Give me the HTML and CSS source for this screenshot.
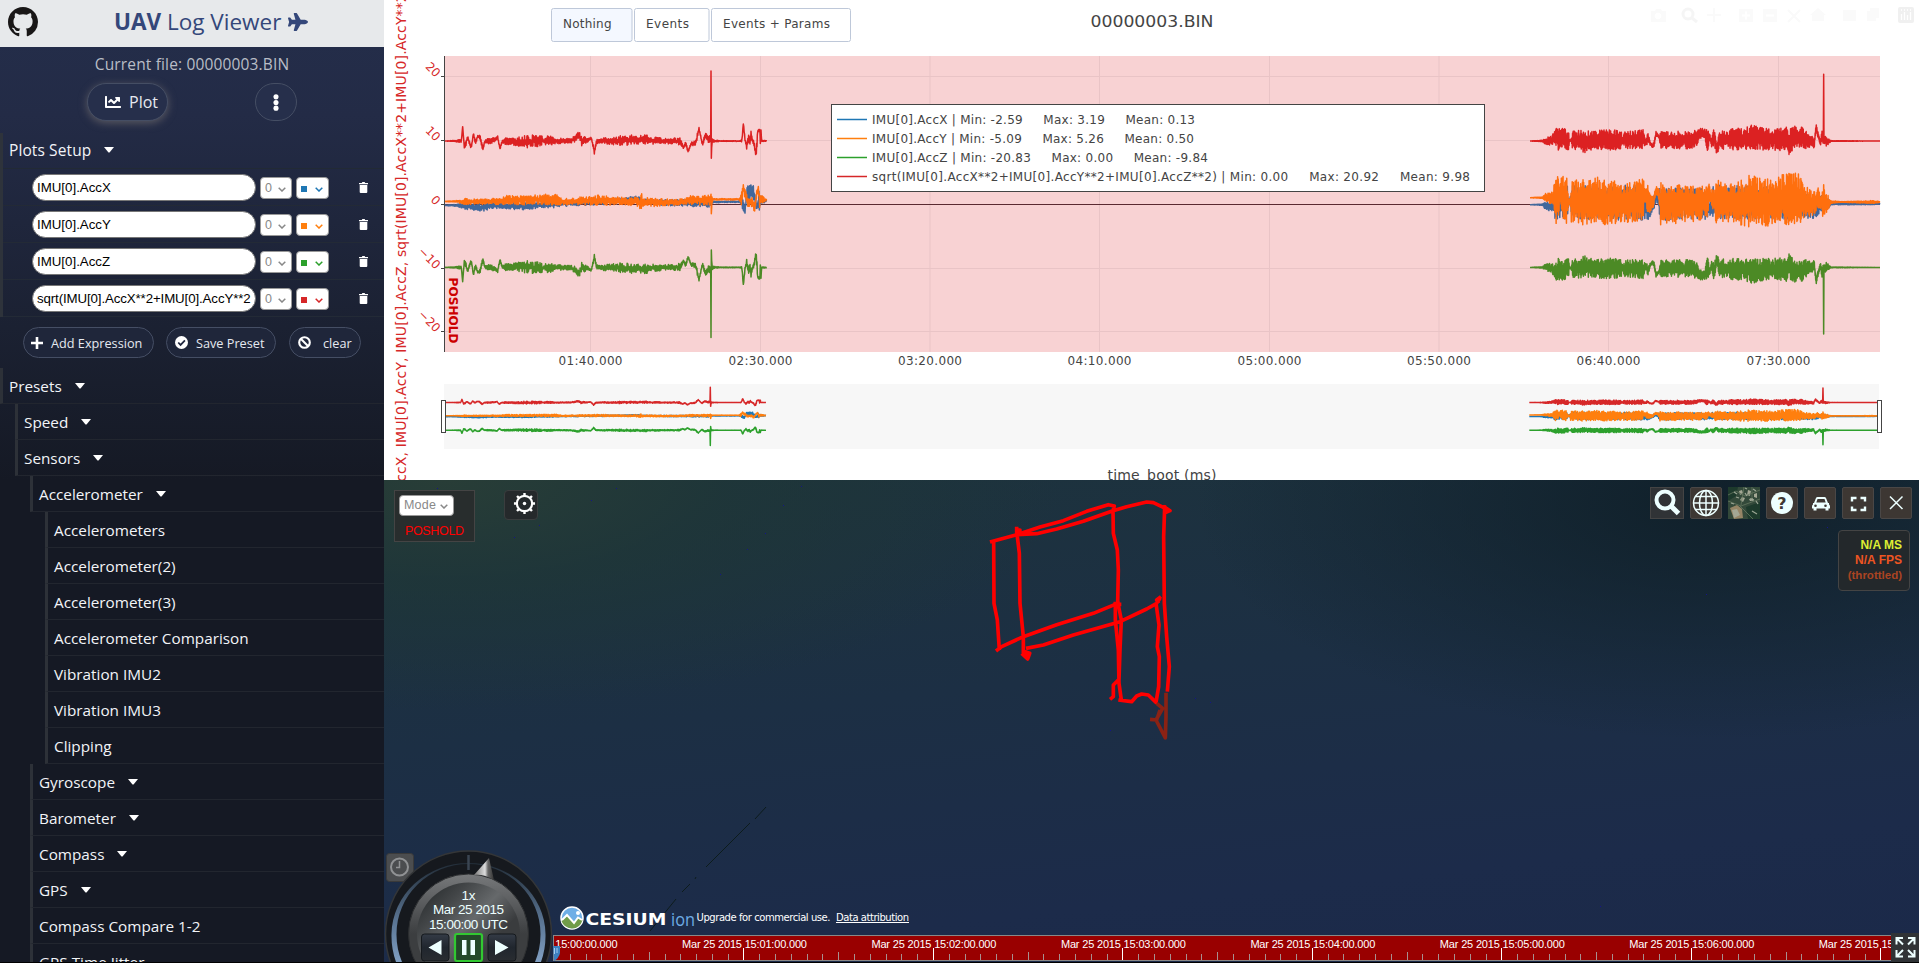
FILE: index.html
```
<!DOCTYPE html>
<html lang="en">
<head>
<meta charset="utf-8">
<title>UAV Log Viewer</title>
<link rel="stylesheet" href="styles.css">
</head>
<body>
<svg width="0" height="0" class="defs">
  <defs>
    <symbol id="trash" viewBox="0 0 9 11"><path d="M0 1h2.800l.6-1h2.200l.6 1H9v1.300H0zM.7 3h7.600v7q0 1-1 1H1.700q-1 0-1-1z"/></symbol>
    <symbol id="chev" viewBox="0 0 8 5"><path d="M.7.7 4 4 7.300.7" fill="none" stroke="currentColor" stroke-width="1.500"/></symbol>
    <symbol id="caret" viewBox="0 0 10 6"><path d="M0 0h10L5.500 5.500h-1z"/></symbol>
  </defs>
</svg>
<div class="app">
  <aside class="sidebar">
    <header class="brand">
      <svg class="github" viewBox="0 0 16 16"><path d="M8 0C3.580 0 0 3.580 0 8c0 3.540 2.290 6.530 5.470 7.590.4.070.55-.17.55-.38 0-.19-.01-.82-.01-1.490-2.010.37-2.530-.49-2.690-.94-.09-.23-.48-.94-.82-1.130-.28-.15-.68-.52-.01-.53.63-.01 1.080.58 1.230.82.72 1.210 1.870.87 2.330.66.070-.52.28-.87.51-1.070-1.780-.2-3.640-.89-3.640-3.950 0-.87.31-1.590.82-2.150-.08-.2-.36-1.020.08-2.120 0 0 .67-.21 2.200.82.64-.18 1.320-.27 2-.27s1.360.09 2 .27c1.530-1.040 2.200-.82 2.200-.82.44 1.100.16 1.920.08 2.120.51.56.82 1.270.82 2.150 0 3.070-1.870 3.750-3.650 3.950.29.25.54.73.54 1.480 0 1.070-.01 1.930-.01 2.200 0 .21.15.46.55.38A8.010 8.010 0 0 0 16 8c0-4.420-3.580-8-8-8z"/></svg>
      <h1><b>UAV</b> Log Viewer</h1>
      <svg class="plane" viewBox="0 0 576 512"><path d="M480 192H365.710L260.610 8.060A16.014 16.014 0 0 0 246.710 0h-65.500c-10.630 0-18.300 10.170-15.380 20.390L214.860 192H112l-43.200-57.600c-3.020-4.030-7.770-6.400-12.800-6.400H16.010C5.600 128-2.040 137.780.49 147.880L32 256 .49 364.120C-2.040 374.220 5.600 384 16.010 384H56c5.040 0 9.780-2.370 12.800-6.400L112 320h102.860l-49.030 171.600c-2.920 10.220 4.750 20.400 15.380 20.400h65.500c5.740 0 11.040-3.080 13.890-8.060L365.710 320H480c35.350 0 96-28.650 96-64s-60.650-64-96-64z"/></svg>
    </header>
    <p class="file">Current file: 00000003.BIN</p>
    <div class="tabs">
      <button class="pill plot"><svg viewBox="0 0 512 512"><path d="M496 384H64V80c0-8.840-7.160-16-16-16H16C7.160 64 0 71.160 0 80v336c0 17.670 14.330 32 32 32h464c8.840 0 16-7.160 16-16v-32c0-8.840-7.160-16-16-16zM464 96H345.940c-21.380 0-32.090 25.850-16.970 40.970l32.400 32.400L288 242.750l-73.370-73.370c-12.500-12.500-32.760-12.500-45.250 0l-68.690 68.690c-6.250 6.250-6.250 16.380 0 22.630l22.620 22.620c6.250 6.250 16.380 6.250 22.630 0L192 237.250l73.370 73.370c12.500 12.500 32.760 12.500 45.250 0l96-96 32.400 32.400c15.120 15.120 40.970 4.410 40.970-16.970V112c.01-8.840-7.150-16-15.990-16z"/></svg><span>Plot</span></button>
      <button class="pill dots"><svg viewBox="0 0 6 18"><circle cx="3" cy="3" r="2.700"/><circle cx="3" cy="9" r="2.700"/><circle cx="3" cy="15" r="2.700"/></svg></button>
    </div>
    <section class="setup">
      <div class="setup-head"><span>Plots Setup</span><svg class="caret"><use href="#caret"/></svg></div>
      <div class="expr blue"><div class="field">IMU[0].AccX</div><div class="sel">0<svg><use href="#chev"/></svg></div><div class="sel color"><i></i><svg><use href="#chev"/></svg></div><svg class="trash"><use href="#trash"/></svg></div>
      <div class="expr orange"><div class="field">IMU[0].AccY</div><div class="sel">0<svg><use href="#chev"/></svg></div><div class="sel color"><i></i><svg><use href="#chev"/></svg></div><svg class="trash"><use href="#trash"/></svg></div>
      <div class="expr green"><div class="field">IMU[0].AccZ</div><div class="sel">0<svg><use href="#chev"/></svg></div><div class="sel color"><i></i><svg><use href="#chev"/></svg></div><svg class="trash"><use href="#trash"/></svg></div>
      <div class="expr red"><div class="field long">sqrt(IMU[0].AccX**2+IMU[0].AccY**2</div><div class="sel">0<svg><use href="#chev"/></svg></div><div class="sel color"><i></i><svg><use href="#chev"/></svg></div><svg class="trash"><use href="#trash"/></svg></div>
    </section>
    <div class="actions">
      <button class="pill small add"><svg viewBox="0 0 12 12"><path d="M4.700 0h2.600v4.700H12v2.600H7.300V12H4.700V7.300H0V4.700h4.700z"/></svg><span>Add Expression</span></button>
      <button class="pill small save"><svg viewBox="0 0 14 14"><circle cx="7" cy="7" r="7"/><path d="M3.500 7 6 9.600l4.700-4.800" fill="none" stroke="#20273f" stroke-width="1.900"/></svg><span>Save Preset</span></button>
      <button class="pill small clear"><svg viewBox="0 0 14 14"><circle cx="7" cy="7" r="5.700" fill="none" stroke="#fff" stroke-width="2.300"/><path d="m3 3 8 8" stroke="#fff" stroke-width="2.200"/></svg><span>clear</span></button>
    </div>
    <ul class="tree">
      <li class="l0"><span>Presets</span><svg class="caret"><use href="#caret"/></svg></li>
      <li class="l1"><span>Speed</span><svg class="caret"><use href="#caret"/></svg></li>
      <li class="l1"><span>Sensors</span><svg class="caret"><use href="#caret"/></svg></li>
      <li class="l2"><span>Accelerometer</span><svg class="caret"><use href="#caret"/></svg></li>
      <li class="l3">Accelerometers</li>
      <li class="l3">Accelerometer(2)</li>
      <li class="l3">Accelerometer(3)</li>
      <li class="l3">Accelerometer Comparison</li>
      <li class="l3">Vibration IMU2</li>
      <li class="l3">Vibration IMU3</li>
      <li class="l3">Clipping</li>
      <li class="l2"><span>Gyroscope</span><svg class="caret"><use href="#caret"/></svg></li>
      <li class="l2"><span>Barometer</span><svg class="caret"><use href="#caret"/></svg></li>
      <li class="l2"><span>Compass</span><svg class="caret"><use href="#caret"/></svg></li>
      <li class="l2"><span>GPS</span><svg class="caret"><use href="#caret"/></svg></li>
      <li class="l2">Compass Compare 1-2</li>
      <li class="l2">GPS Time Jitter</li>
    </ul>
  </aside>
  <main class="content">
    <section class="chart">
      <svg id="plot" viewBox="384 0 1535 480" width="1535" height="480">
        <text x="1090.500" y="27" class="title" textLength="123" lengthAdjust="spacingAndGlyphs">00000003.BIN</text>
        <g class="menu">
          <rect x="551.500" y="8.500" width="80.500" height="33" rx="2"/>
          <rect x="634.500" y="8.500" width="74.500" height="33" rx="2"/>
          <rect x="711.500" y="8.500" width="139" height="33" rx="2"/>
          <text x="563" y="28" textLength="48.500">Nothing</text>
          <text x="646" y="28" textLength="43">Events</text>
          <text x="723" y="28" textLength="107">Events + Params</text>
        </g>
        <g class="modebar" transform="translate(0 7)">
          <path d="M1651 4h4l1-2h5l1 2h4v11h-15z"/><circle cx="1658" cy="9" r="3" class="hole"/>
          <path d="M1707 8h14M1714 1v14" class="line"/>
          <path d="M1739 2h14v13h-14zM1763 2h14v13h-14z"/><path d="M1742 8.500h8M1746 4.500v8M1766 8.500h8" class="line hole"/>
          <path d="m1788 3 12 12m0-12-12 12" class="line"/><path d="m1818 1 8 7h-2v6h-12V8h-2z"/>
          <path d="M1843 3h13v11h-13zM1867 4h9v10h-9zM1870 1h9v10h-9z"/>
        </g>
        <g class="zoom-tool"><circle cx="1688" cy="14" r="5"/><path d="m1692 18 5 4"/></g>
        <g transform="translate(1898 7)"><rect width="16" height="16" rx="2" fill="#f0f0f0"/><path d="M3.500 13V7M6.500 13V5M9.500 13V8M12.500 13V5M3 3h1M6 3h1M9 3h1M12 3h1" stroke="#fff" stroke-width="1.300"/></g>
        <rect x="445" y="56" width="1435" height="296" fill="#f8d2d3"/>
        <path d="M445 76.500h1435M445 140.500h1435M445 268.500h1435M445 331.500h1435M590.500 56v296M760.500 56v296M930 56v296M1099.500 56v296M1269.500 56v296M1439 56v296M1608.500 56v296M1778.500 56v296" stroke="#e9c4c6" fill="none"/>
        <path d="M445 204.500h1435" stroke="#5a2a31"/>
        <rect x="444" y="384" width="1435" height="65" fill="#f7f7f7"/>
        <g id="traces" fill="none" stroke-linejoin="round"></g>
        <path d="M444.500 56v296M441 76.500h3M441 140.500h3M441 204.500h3M441 268.500h3M441 331.500h3" stroke="#444"/>
        <g class="ytick">
          <text transform="translate(435.500 78) rotate(45)">20</text>
          <text transform="translate(435.500 142) rotate(45)">10</text>
          <text transform="translate(435.500 206) rotate(45)">0</text>
          <text transform="translate(435.500 270) rotate(45)">−10</text>
          <text transform="translate(435.500 333) rotate(45)">−20</text>
        </g>
        <text class="ytitle" transform="translate(406 204.500) rotate(-90)" textLength="677">IMU[0].AccX, IMU[0].AccY, IMU[0].AccZ, sqrt(IMU[0].AccX**2+IMU[0].AccY**2+IMU[0].AccZ**2)</text>
        <text class="mode" transform="translate(449 277.500) rotate(90)" textLength="66">POSHOLD</text>
        <g class="xtick">
          <text x="558.500" y="365" textLength="64">01:40.000</text><text x="728.500" y="365" textLength="64">02:30.000</text>
          <text x="898" y="365" textLength="64">03:20.000</text><text x="1067.500" y="365" textLength="64">04:10.000</text>
          <text x="1237.500" y="365" textLength="64">05:00.000</text><text x="1407" y="365" textLength="64">05:50.000</text>
          <text x="1576.500" y="365" textLength="64">06:40.000</text><text x="1746.500" y="365" textLength="64">07:30.000</text>
        </g>
        <g fill="#fff" stroke="#444"><rect x="441.500" y="400.500" width="4" height="32"/><rect x="1877.500" y="400.500" width="4" height="32"/></g>
        <text x="1107.500" y="479.500" class="xtitle" textLength="109">time_boot (ms)</text>
        <rect x="831.500" y="104.500" width="653" height="87" fill="#fff" stroke="#444"/>
        <g stroke-width="1.500"><path d="M837 119.500h30" stroke="#1f77b4"/><path d="M837 138.500h30" stroke="#ff7f0e"/><path d="M837 157.500h30" stroke="#2ca02c"/><path d="M837 176.500h30" stroke="#d62728"/></g>
        <g class="legend">
          <text x="872" y="124" textLength="323">IMU[0].AccX | Min: -2.59 &#160; &#160; Max: 3.19 &#160; &#160; Mean: 0.13</text>
          <text x="872" y="143" textLength="322">IMU[0].AccY | Min: -5.09 &#160; &#160; Max: 5.26 &#160; &#160; Mean: 0.50</text>
          <text x="872" y="162" textLength="336">IMU[0].AccZ | Min: -20.83 &#160; &#160; Max: 0.00 &#160; &#160; Mean: -9.84</text>
          <text x="872" y="181" textLength="598">sqrt(IMU[0].AccX**2+IMU[0].AccY**2+IMU[0].AccZ**2) | Min: 0.00 &#160; &#160; Max: 20.92 &#160; &#160; Mean: 9.98</text>
        </g>
      </svg>
    </section>
    <section class="map">
      <svg class="scene" viewBox="384 480 1535 482" width="1535" height="482">
        <defs>
          <linearGradient id="ring" x1="0" y1="0" x2="0" y2="1"><stop offset="0" stop-color="#77797b"/><stop offset=".5" stop-color="#3c3e40"/></linearGradient>
          <linearGradient id="face" x1="0" y1="0" x2="1" y2="1"><stop offset="0" stop-color="#1f2325"/><stop offset=".25" stop-color="#434648"/><stop offset=".45" stop-color="#66696b"/><stop offset=".65" stop-color="#3a3c3e"/></linearGradient>
          <linearGradient id="arc" x1="0" y1="0" x2="0" y2="1"><stop offset="0" stop-color="#222d38"/><stop offset=".6" stop-color="#5b7695"/><stop offset="1" stop-color="#809fc2"/></linearGradient>
          <linearGradient id="needle"><stop offset="0" stop-color="#777"/><stop offset=".55" stop-color="#ddd"/><stop offset=".7" stop-color="#666"/><stop offset="1" stop-color="#333"/></linearGradient>
          <linearGradient id="btn" x1="0" y1="0" x2="0" y2="1"><stop offset="0" stop-color="#343b46"/><stop offset=".5" stop-color="#20262e"/><stop offset="1" stop-color="#292d31"/></linearGradient>
          <clipPath id="tl"><rect x="554" y="935" width="1337" height="27"/></clipPath>
        </defs>
        <path d="M766 807l-11 12M750 823l-44 44M696 877l-1 2M690 884l-8 8M676 899l-26 32" stroke="#0d1c1c" fill="none"/>
        <g transform="translate(960 470) scale(.33333)" fill="none" stroke="#f00" stroke-width="11" stroke-linejoin="round">
          <path d="M90 216 170 194 240 171 310 152 380 124 445 104 463 108 459 122 460 190 472 240 475 300 473 400 400 430 290 464 190 500 125 530 108 543M101 212 102 400 112 450 118 540M170 170 170 194 230 191 290 177 370 154 459 122 500 110 560 96 580 98 610 112 628 124M167 180 180 180 172 200 178 250 180 400 190 500 190 550"/>
          <path d="M185 550 203 567 209 550 195 545 203 567M198 535 250 525 340 495 480 455 560 417 590 400 600 385M620 110 614 112 611 200 613 400 620 500 628 590 622 665M466 395 466 450 475 540 477 640 484 690M473 395 484 450 480 540 477 628 460 645 460 680 450 688M475 690 515 695 530 678 545 672 565 675 588 697 596 650 598 560 592 530 597 465 588 400M603 380 590 390 596 400M460 403h24M612 110l18 12-14 6z"/>
          <path d="M618 668 618 740 616 804 588 750 608 715 590 700M600 720 590 750 570 748" stroke="#8b2214"/>
        </g>
        <g fill="#14148a"><path d="M437 488h1v1h-1zM616 488h1v1h-1zM591 500h1v1h-1zM539 525h1v1h-1zM514 537h1v1h-1zM720 574h1v1h-1zM747 549h1v1h-1zM765 533h1v1h-1zM783 505h1v1h-1zM801 486h1v1h-1zM1827 527h1v1h-1zM1706 594h1v1h-1zM1195 698h1v1h-1zM1210 702h1v1h-1zM1600 906h1v1h-1zM1110 730h1v1h-1z"/></g>
        <g class="clockbtn"><rect x="386.500" y="853.500" width="27" height="28" rx="3" fill="#4b4d4f" stroke="#3a3a3a"/><circle cx="399.500" cy="867" r="8.500" fill="none" stroke="#909294" stroke-width="2"/><path d="M399.500 861v6.500h-3.500" fill="none" stroke="#909294" stroke-width="1.500"/></g>
        <circle cx="468.500" cy="934" r="83" fill="#16191e" stroke="#343638" stroke-width="1.500"/>
        <path d="M396 962A77 77 0 0 1 391.500 934A77 72 0 0 1 468.500 863A77 72 0 0 1 545.500 934A77 77 0 0 1 541 962H535A72 72 0 0 0 540.500 934A72 70 0 0 0 468.500 864A72 70 0 0 0 396.500 934A72 72 0 0 0 402 962Z" fill="url(#arc)"/>
        <path d="M468.500 855v15" stroke="#3a4552" stroke-width="2.500"/>
        <circle cx="468.500" cy="934" r="60" fill="url(#ring)" stroke="#2c2e30"/>
        <circle cx="468.500" cy="934" r="51.500" fill="url(#face)"/>
        <path d="M489 858 474 875Q484 874 494 880Z" fill="url(#needle)"/>
        <g class="clocktext">
          <text x="468.500" y="900" textLength="14">1x</text>
          <text x="468.500" y="914" textLength="71">Mar 25 2015</text>
          <text x="468.500" y="929" textLength="79">15:00:00 UTC</text>
        </g>
        <g fill="url(#btn)" stroke="#15191d"><rect x="421.500" y="934" width="27.500" height="27" rx="3"/><rect x="488" y="934" width="28" height="27" rx="3"/></g>
        <rect x="455" y="934" width="27" height="27" rx="2" fill="#24492a" stroke="#32c832" stroke-width="2.200"/>
        <path d="M441.500 940v15L428.500 947.500zM495 940v15L508.500 947.500zM462 940h4.500v15h-4.500zM470.500 940h4.500v15h-4.500z" fill="#edffff"/>
        <g><circle cx="572" cy="918" r="11" fill="#6eaee6" stroke="#fff" stroke-width="1.500"/><path d="M561.500 921 568 915 574 922 578 917.500 582.500 920Q580 928.500 572 928.500 564 928 561.500 921Z" fill="#709c49"/><path d="M562 920 567 915 574 923 578 917.500 582 920" fill="none" stroke="#fff" stroke-width="2"/><circle cx="578" cy="913" r="2" fill="#fff"/></g>
        <text x="585.500" y="925" class="cesium" textLength="81" lengthAdjust="spacingAndGlyphs">CESIUM</text>
        <text x="671" y="925.500" class="ion" textLength="24" lengthAdjust="spacingAndGlyphs">ion</text>
        <g class="credit"><text x="696.500" y="921" textLength="134">Upgrade for commercial use.</text><text x="836" y="921" textLength="73">Data attribution</text><path d="M836 922.500h73" stroke="#fff"/></g>
        <rect x="553" y="935" width="1338" height="26" fill="#900"/>
        <path d="M553 935.500h1338M553 960.500h1338M553.500 935v26" stroke="#888" fill="none"/>
        <g id="timeline" clip-path="url(#tl)"></g>
        <path d="M553 946h7v7q-1 5-6 8z" fill="#3c7fc0"/><path d="M554.500 948v6M557 948v5" stroke="#a5cdf0"/>
        <g><rect x="1891" y="933" width="28" height="29" fill="#303336"/><g fill="none" stroke="#edffff" stroke-width="2"><path d="M1896.500 944.500v-6.500h6.500M1897 938.500l6 6M1908 938h6.500v6.500M1914 938.500l-6 6M1896.500 950v6.500h6.500M1897 956l6-6M1914.500 950v6.500h-6.500M1914 956l-6-6"/></g></g>
      </svg>
      <div class="modebox"><div class="sel modesel">Mode<svg><use href="#chev"/></svg></div><span>POSHOLD</span></div>
      <div class="gear"><svg viewBox="0 0 24 24"><circle cx="12" cy="12" r="8" fill="none" stroke="#fff" stroke-width="2.300"/><circle cx="12" cy="12" r="1.800"/><path d="M12 1v4M12 19v4M1 12h4M19 12h4M4.200 4.200l2.500 2.500M17.300 17.300l2.500 2.500M4.200 19.800l2.500-2.500M17.300 6.700l2.500-2.500" stroke="#fff" stroke-width="2.500"/></svg></div>
      <div class="toolbar">
        <div class="tb search"><svg viewBox="0 0 34 32"><circle cx="15" cy="13" r="8.500" fill="none" stroke="#edffff" stroke-width="4"/><path d="m21 19 7.500 7.500" stroke="#edffff" stroke-width="5"/></svg></div>
        <div class="tb"><svg viewBox="0 0 32 32" fill="none" stroke="#edffff" stroke-width="1.500"><circle cx="16" cy="16" r="12.500"/><ellipse cx="16" cy="16" rx="6.500" ry="12.500"/><path d="M16 3.500v25M3.500 16h25M5.500 9.500h21M5.500 22.500h21"/></svg></div>
        <div class="tb sat"><svg viewBox="0 0 32 32"><rect width="32" height="32" fill="#33493a"/><path d="M0 0h10l-2 9L0 14zM18 20l14-5v17H20z" fill="#1d3a2c"/><path d="M2 21l7-3 5 4 1 9-9 1z" fill="#958566"/><path d="M4 23l5-1 3 6-6 3zM11 4l3-1 1 3-3 2zM20 3l3 1-1 5-3-1zM26 7l3-1v5l-3-1zM14 10l3 1-2 4-3-2zM21 12l4-1v3h-3z" fill="#a3a794"/><path d="M0 14 13 19 32 12M12 19l13 13M16 0l-3 18M0 8l8-4 9 5 15-6M24 0v14" fill="none" stroke="#66775f" stroke-width=".8"/><path d="M17 6l2 3M25 2l3 2M6 5l3 2M22 12l4 1M24 24l5 3M8 10l3 1M28 14l2 3M3 16l3 1M17 1l2 1" stroke="#9aa593" stroke-width="1.300"/></svg></div>
        <div class="tb"><svg viewBox="0 0 32 32"><circle cx="16" cy="16" r="11" fill="#edffff"/><text x="16" y="21.500" class="q">?</text></svg></div>
        <div class="tb"><svg viewBox="0 0 32 32"><path d="M8 16h1l2-5q.5-1 1.500-1h7q1 0 1.500 1l2 5h1v1.500q1 .5 1 2v2h-1.500v2h-3v-2h-9v2h-3v-2H7v-2q0-1.500 1-2zM12.500 12 11.300 15.500h9.400L19.500 12z" fill="#edffff" fill-rule="evenodd" transform="translate(1 0)"/><circle cx="11.500" cy="18.700" r="1.300" fill="#3d3733"/><circle cx="21.500" cy="18.700" r="1.300" fill="#3d3733"/></svg></div>
        <div class="tb"><svg viewBox="0 0 32 32" fill="none" stroke="#edffff" stroke-width="2.400"><path d="M10 14.500v-3.500h4.500M18.500 11H23v3.500M10 19.500V23h4.500M18.500 23H23v-3.500"/></svg></div>
        <div class="tb"><svg viewBox="0 0 32 32" stroke="#edffff" stroke-width="1.500"><path d="m10 9.500 12.500 12.500m0-12.500-12.500 12.500"/></svg></div>
      </div>
      <div class="fps"><span class="ms">N/A MS</span><span class="fr">N/A FPS</span><span class="th">(throttled)</span></div>
    </section>
  </main>
</div>
<script src="plot.js"></script>
</body>
</html>
```
FILE: styles.css
```
* { box-sizing: border-box; }
body { margin: 0; background: #000; overflow: hidden; font-family: "Open Sans", sans-serif; }
.defs { position: absolute; }
.app { display: grid; grid-template-columns: 384px 1535px; height: 962px; }
.sidebar { height: 962px; overflow: hidden; color: #f2f4f8; background: linear-gradient(#242e4b 0, #232b46 12%, #1b2132 34%, #151924 50%, #151924 100%); }
.brand { height: 47px; background: #e7e9eb; display: flex; align-items: center; padding-left: 8px; }
.github { width: 30px; height: 30px; fill: #191717; margin-top: -4px; }
.brand h1 { margin: -4px 0 0 76px; width: 165px; font-size: 22.500px; font-weight: 400; letter-spacing: 0; color: #34477a; white-space: nowrap; }
.plane { width: 20px; height: 18px; margin: -3px 0 0 9px; fill: #34477a; }
.file { margin: 0; padding-top: 7px; height: 36px; line-height: 20px; font-size: 15.500px; text-align: center; color: #b9bdc6; letter-spacing: .15px; }
.tabs { display: flex; gap: 87px; padding-left: 87px; height: 50px; }
.pill { height: 38px; padding: 0; border: 1px solid #454e64; border-radius: 19px; background: #262f4b; color: #e6e9f0; font: 16px "Open Sans", sans-serif; display: flex; align-items: center; white-space: nowrap; }
.pill svg { fill: #fff; flex: none; }
.plot { width: 81px; padding-left: 17px; gap: 8px; box-shadow: 0 2px 8px #5b5a62; }
.plot svg { width: 16px; height: 16px; }
.dots { width: 42px; justify-content: center; }
.dots svg { width: 6px; height: 17px; }
.setup { border-left: 3px solid #2e333b; }
.setup-head { height: 36px; padding: 0 0 1px 6px; display: flex; align-items: center; font-size: 15.500px; letter-spacing: .1px; border-bottom: 1px solid #222a35; }
.caret { width: 10px; height: 6px; fill: #fff; margin-left: 13px; }
.expr { height: 37px; display: flex; align-items: center; padding-left: 29px; border-bottom: 1px solid #232a36; }
.field { width: 224px; height: 27px; border: 1.500px solid #777; border-radius: 14px; background: #fff; color: #000; font: 13.300px/26px "Liberation Sans", sans-serif; padding-left: 4px; overflow: hidden; white-space: nowrap; }
.long { letter-spacing: -.12px; }
.sel { width: 32px; height: 22px; margin: 2px 0 0 4px; background: #fff; border: 1px solid #999; border-radius: 4px; color: #888; font: 12.500px "Liberation Sans", sans-serif; display: flex; align-items: center; justify-content: space-between; padding: 0 5px 1px 4px; }
.sel svg { width: 8px; height: 5px; margin-top: 3px; }
.color { width: 33px; padding: 0 5px 0 4px; }
.color i { width: 6px; height: 6px; background: currentColor; margin-top: 2px; }
.blue .color { color: #1f77b4; } .orange .color { color: #ff7f0e; } .green .color { color: #2ca02c; } .red .color { color: #d62728; }
.trash { width: 9px; height: 11px; fill: #fff; margin-left: 30px; }
.actions { display: flex; padding: 10px 0 0 23px; height: 51px; }
.small { height: 31px; font-size: 12.700px; background: #1f263a; }
.add { width: 131px; padding-left: 7px; gap: 8px; } .add svg { width: 12px; height: 12px; }
.save { width: 110px; margin-left: 12px; padding-left: 8px; gap: 8px; } .save svg, .clear svg { width: 13px; height: 13px; }
.clear { width: 72px; margin-left: 13px; padding-left: 8px; gap: 12px; }
.tree { list-style: none; margin: 0; padding: 0; }
.tree li { height: 36px; display: flex; align-items: center; border-left: 3px solid #2d3138; border-bottom: 1px solid #22262f; padding-left: 6px; font-size: 15.300px; white-space: nowrap; }
.tree .l1 { margin-left: 15px; } .tree .l2 { margin-left: 30px; } .tree .l3 { margin-left: 45px; }
.content { display: flex; flex-direction: column; width: 1535px; }
.chart { height: 480px; background: #fff; overflow: hidden; }
.chart svg { display: block; font-family: "DejaVu Sans", sans-serif; font-size: 12px; fill: #444; }
.title { font-size: 16.500px; }
.menu rect { stroke: #bec8d9; fill: #fff; } .menu rect:first-child { fill: #f4f8ff; }
.modebar { fill: #fafafa; } .modebar .line { fill: none; stroke: #fafafa; stroke-width: 2; } .modebar .hole { fill: #fff; stroke: #fff; }
.zoom-tool { fill: none; stroke: #f5f5f5; stroke-width: 3; }
.ytick { fill: #d62728; text-anchor: end; }
.ytitle { fill: #d62728; font-size: 14px; text-anchor: middle; }
.mode { fill: #c00; font-weight: bold; font-size: 12px; }
.xtitle { font-size: 14px; }
.map { position: relative; height: 482px; overflow: hidden; background:
  radial-gradient(ellipse 520px 240px at 1330px 20px, #10202a 0, rgba(16,32,42,0) 100%),
  radial-gradient(ellipse 620px 230px at 60px 0, #283d37 0, rgba(31,55,55,.7) 45%, rgba(28,50,58,0) 100%),
  linear-gradient(174deg, #1d333c 0, #1c2f44 42%, #1c2b4a 78%, #1b2949 100%); }
.scene { display: block; }
.clocktext { fill: #edffff; font: 13.500px "Liberation Sans", sans-serif; text-anchor: middle; }
.cesium { fill: #fff; font: bold 16.500px "DejaVu Sans", sans-serif; }
.ion { fill: #6dabe4; font: 19px "Open Sans", sans-serif; }
.credit { fill: #fff; font: 10px "DejaVu Sans", sans-serif; }
#timeline text { fill: #fff; font: 11px "Liberation Sans", sans-serif; text-anchor: middle; }
.modebox { position: absolute; left: 10px; top: 10px; width: 81px; height: 52px; background: #282d2d; border: 1px solid #444; padding: 4px; color: #f00; font: 12.500px "Liberation Sans", sans-serif; }
.modesel { width: 55px; height: 21px; margin: 0 0 8px; font-size: 12.500px; letter-spacing: .2px; }
.modebox span { display: block; padding-left: 6px; width: 70px; letter-spacing: -.35px; }
.gear { position: absolute; left: 120px; top: 10px; width: 34px; height: 30px; border: 1px solid #3a3d3e; border-radius: 4px; background: #25292b; }
.gear svg { position: absolute; left: 8px; top: 1px; width: 23px; height: 23px; fill: #fff; }
.toolbar { position: absolute; left: 1266px; top: 7px; display: flex; gap: 6px; }
.tb { width: 32px; height: 32px; background: #3d3733; border: 1px solid #4a4746; border-radius: 2px; }
.tb svg { display: block; width: 32px; height: 32px; margin: -1px; }
.search { width: 34px; background: #303336; border-color: #444; border-radius: 0; }
.search svg { width: 34px; }
.q { font: bold 16px "DejaVu Sans", sans-serif; text-anchor: middle; fill: #3d3733; }
.fps { position: absolute; left: 1454px; top: 50px; width: 72px; height: 61px; background: #23282b; border: 1px solid #444; border-radius: 4px; padding: 7px 7px; display: flex; flex-direction: column; text-align: right; font: bold 12px/15px "Liberation Sans", sans-serif; white-space: nowrap; }
.ms { color: #de3; } .fr { color: #e52; } .th { color: #a42; font-size: 11.500px; }
```
FILE: plot.js
```
// Seeded generator so that the sensor noise is the same on every load
let seed = 20150325;
function rnd() {
  seed = (seed * 1664525 + 1013904223) % 4294967296;
  return seed / 4294967296;
}

// Key points: [x, centre, amplitude], in thirds of a pixel
const RED_L = [[181,423,0],[215,423,2],[232,423,5],[236,380,0],[241,443,3],[246,430,8],[251,410,3],[260,441,5],[264,432,6],[268,402,4],[274,425,7],[280,412,6],[285,408,6],[291,424,12],[298,445,6],[302,424,5],[320,424,9],[335,416,7],[341,412,5],[348,446,4],[355,424,5],[365,424,10],[385,424,10],[430,424,17],[462,422,18],[480,422,10],[500,421,14],[520,423,10],[540,423,6],[560,422,7],[575,414,10],[582,403,8],[592,420,16],[605,421,8],[622,414,6],[631,455,6],[638,424,6],[660,422,8],[680,424,8],[715,422,15],[745,420,13],[760,420,11],[775,416,14],[800,421,11],[840,423,7],[870,423,8],[890,424,10],[898,444,3],[905,428,4],[912,454,4],[922,430,5],[935,430,8],[945,385,6],[955,434,7],[965,406,8],[972,418,8],[978,420,12],[980,425,0],[981,213,0],[982,475,0],[984,422,12],[990,423,3],[1010,423,1],[1070,423,1],[1074,420,5],[1078,370,2],[1083,418,5],[1088,440,8],[1094,415,10],[1098,425,12],[1101,403,8],[1106,420,8],[1110,434,10],[1116,462,8],[1119,430,10],[1121,393,5],[1128,393,6],[1129,435,5],[1131,393,4],[1133,423,2],[1148,423,1]];
const RED_R = [[150,423,0],[188,423,2],[195,423,9],[215,422,12],[222,415,18],[228,410,27],[235,420,30],[248,410,24],[262,418,28],[267,425,25],[269,422,3],[273,422,4],[276,422,24],[302,418,26],[313,428,30],[325,420,27],[400,420,27],[425,420,25],[428,420,5],[433,420,22],[490,418,25],[497,425,10],[500,424,18],[504,410,10],[510,430,6],[518,438,4],[523,430,10],[528,400,6],[537,410,4],[543,420,22],[605,420,24],[611,420,8],[615,420,24],[640,422,20],[646,412,24],[652,415,20],[658,402,14],[668,398,12],[677,408,20],[683,422,28],[690,410,8],[694,430,14],[700,412,25],[706,425,18],[710,450,18],[716,425,20],[722,418,26],[760,418,28],[800,416,30],[815,412,33],[860,418,28],[900,418,29],[918,416,32],[928,430,35],[940,412,30],[968,410,28],[975,420,25],[990,424,17],[1003,430,14],[1008,380,8],[1014,405,8],[1021,430,8],[1026,405,10],[1029,420,16],[1030,423,0],[1031,223,0],[1032,430,0],[1036,422,16],[1047,423,8],[1053,423,1],[1200,423,0]];
const ORG_L = [[181,604,1],[220,604,2],[235,605,9],[280,606,7],[330,604,8],[350,606,9],[366,600,13],[400,602,12],[440,600,12],[480,598,14],[520,600,14],[545,605,9],[600,602,11],[660,600,14],[700,603,11],[730,604,9],[765,606,14],[771,612,26],[773,606,26],[777,606,12],[850,607,10],[900,605,7],[922,600,13],[975,602,14],[979,602,12],[981,583,0],[982,641,0],[984,598,10],[988,598,2],[1066,598,2],[1072,598,15],[1078,560,18],[1083,585,18],[1088,598,14],[1096,612,12],[1105,602,15],[1112,622,15],[1117,590,18],[1123,562,10],[1127,600,25],[1134,598,10],[1142,600,5],[1148,600,2]];
const BLU_L = [[181,616,1],[220,616,3],[235,617,8],[262,622,9],[295,622,11],[330,616,8],[370,618,9],[425,619,10],[460,614,9],[520,613,9],[560,609,8],[650,605,8],[720,603,8],[745,598,9],[765,596,6],[775,604,6],[850,608,8],[975,610,10],[988,606,2],[1068,605,2],[1074,598,25],[1078,610,24],[1083,632,8],[1088,585,25],[1095,575,20],[1108,572,22],[1114,605,12],[1120,622,12],[1126,600,35],[1132,600,25],[1136,603,8],[1148,602,1]];
const ORG_R = [[150,593,0],[186,593,2],[194,593,11],[215,594,17],[220,592,20],[223,596,60],[232,602,66],[239,590,40],[241,570,10],[244,596,65],[250,606,70],[263,602,60],[266,605,8],[271,605,8],[274,605,55],[310,606,60],[350,604,64],[390,606,57],[425,608,55],[428,600,15],[432,608,52],[460,606,55],[490,600,55],[494,580,25],[499,590,20],[505,605,52],[511,606,25],[520,608,14],[527,576,12],[534,573,15],[538,590,30],[542,612,57],[572,612,55],[607,610,52],[611,608,18],[615,612,50],[640,610,48],[644,608,20],[648,608,52],[666,606,45],[671,605,22],[676,610,45],[682,590,55],[688,580,35],[693,590,15],[697,600,45],[702,600,20],[708,605,56],[745,605,53],[800,607,63],[815,600,74],[840,605,64],[880,607,62],[884,620,72],[887,605,58],[905,600,66],[925,598,75],[932,612,94],[938,600,76],[968,598,64],[974,605,40],[1000,610,36],[1010,600,25],[1017,590,30],[1020,610,15],[1028,606,38],[1031,598,45],[1035,612,30],[1046,608,18],[1052,606,4],[1080,606,1],[1160,606,3],[1180,606,4],[1200,606,1]];
const BLU_R = [[150,614,0],[188,614,2],[195,617,10],[205,620,12],[220,616,14],[224,606,44],[262,606,44],[266,604,8],[271,604,14],[276,608,46],[425,610,46],[430,606,10],[434,608,46],[490,608,46],[498,624,26],[504,628,30],[512,630,14],[520,612,18],[528,586,18],[535,590,20],[540,612,44],[605,612,42],[670,612,40],[680,622,36],[690,628,18],[696,606,40],[720,606,44],[970,610,41],[975,618,32],[1000,624,28],[1010,620,28],[1020,615,22],[1032,610,25],[1046,612,14],[1052,612,2],[1160,612,2],[1200,612,1]];

// Dense traces pack several swings into each pixel column
function samples(keys, x0, step, floor) {
  const out = [];
  let side = 1;
  for (let i = 0; i < keys.length - 1; i++) {
    const [ax, ac, aa] = keys[i], [bx, bc, ba] = keys[i + 1];
    const n = Math.max(1, Math.round((bx - ax) / step));
    for (let k = 0; k < n; k++) {
      const t = k / n;
      side = -side;
      out.push([x0 + (ax + (bx - ax) * t) / 3,
        (ac + (bc - ac) * t + side * (aa + (ba - aa) * t) * (floor + (1.15 - floor) * rnd())) / 3]);
    }
  }
  const last = keys[keys.length - 1];
  out.push([x0 + last[0] / 3, last[1] / 3]);
  return out;
}

function draw(points, color, width) {
  const p = document.createElementNS('http://www.w3.org/2000/svg', 'path');
  p.setAttribute('d', 'M' + points.map(q => q[0].toFixed(2) + ' ' + q[1].toFixed(2)).join('L'));
  p.setAttribute('stroke', color);
  p.setAttribute('stroke-width', width);
  document.getElementById('traces').appendChild(p);
}

// AccZ mirrors the norm about its own mean
const mirror = pts => pts.map(([x, y]) => [x, 267.4 - (y - 141)]);
const left = keys => samples(keys, 384, 1.2, 0.15);
const right = keys => samples(keys, 1480, 0.9, 0.35);
const redL = left(RED_L), redR = right(RED_R);
const traces = [
  [left(BLU_L), right(BLU_R), '#41689c', '#1f77b4'],
  [left(ORG_L), right(ORG_R), '#ff6f0e', '#ff7f0e'],
  [mirror(redL), mirror(redR), '#4c8a25', '#2ca02c'],
  [redL, redR, '#dc2122', '#d62728']
];
const shrink = pts => pts.map(([x, y]) => [x - 0.7, 416.4 + (y - 204.4) * 0.219]);
for (const [l, r, main, mini] of traces) {
  draw(l, main, 1.5);
  draw(r, main, 1.5);
  draw(shrink(l), mini, 1.5);
  draw(shrink(r), mini, 1.5);
}

// Timeline: one label a minute, a tick every five seconds
let ticks = '';
for (let m = 0; m < 8; m++) {
  const x = 555 + m * 189.47;
  ticks += `<text x="${x}" y="948" textLength="125">Mar 25 2015 15:0${m}:00.000</text>`;
  for (let s = 0; s < 12; s++) {
    const tx = Math.round(x + s * 15.79) - 0.5;
    const top = s === 0 ? 948 : s === 6 ? 952 : 954;
    ticks += `<path d="M${tx} ${top}V960" stroke="${s === 0 ? '#fff' : '#a89090'}"/>`;
  }
}
document.getElementById('timeline').innerHTML = ticks;
```
